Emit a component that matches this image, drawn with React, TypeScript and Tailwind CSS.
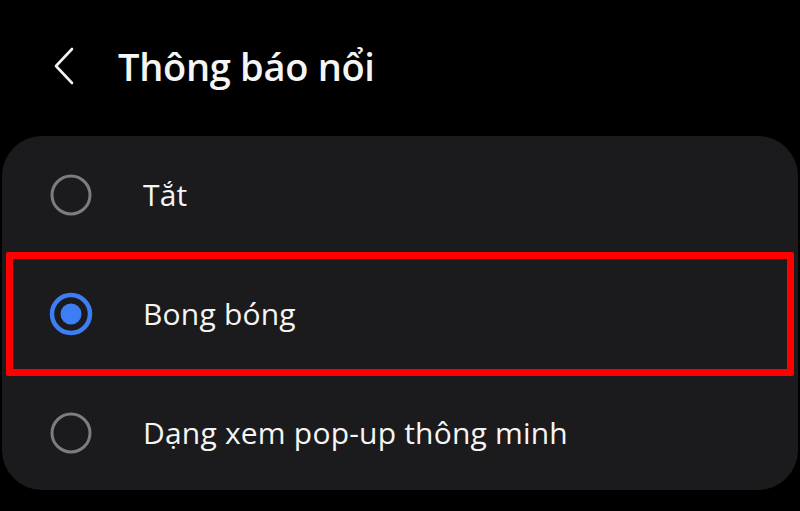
const OPTIONS = [
  { label: "Tắt", selected: false },
  { label: "Bong bóng", selected: true },
  { label: "Dạng xem pop-up thông minh", selected: false },
];

function Radio({ selected }: { selected: boolean }) {
  return (
    <svg width="46" height="46" viewBox="0 0 46 46" className="shrink-0">
      {selected ? (
        <>
          <circle cx="23" cy="23" r="19" fill="none" stroke="#3d7ef5" strokeWidth="4.5" />
          <circle cx="23" cy="23" r="10.5" fill="#3d7ef5" />
        </>
      ) : (
        <circle cx="23" cy="23" r="19" fill="none" stroke="#7d7d7f" strokeWidth="3" />
      )}
    </svg>
  );
}

export default function App() {
  return (
    <div
      className="w-[800px] h-[511px] bg-black overflow-hidden text-[#f5f5f5]"
      style={{ fontFamily: "'Open Sans', Roboto, sans-serif" }}
    >
      {/* Header */}
      <div className="flex items-center h-[136px] pl-[50px] pb-[4px]">
        <svg width="30" height="40" viewBox="0 0 30 40" className="shrink-0">
          <path d="M22 3 L6 20 L22 37" fill="none" stroke="#f2f2f2" strokeWidth="2.6" strokeLinecap="round" strokeLinejoin="round" />
        </svg>
        <h1 className="ml-[38px] text-[38px] font-semibold tracking-[-0.3px]">Thông báo nổi</h1>
      </div>

      {/* Options card */}
      <div className="mx-[2px] w-[796px] h-[354px] rounded-[40px] bg-[#1b1b1d] flex flex-col pt-[2px]">
        {OPTIONS.map((opt) => (
          <div
            key={opt.label}
            className={
              opt.selected
                ? "flex items-center h-[127px] mx-[4px] border-[7px] border-[#ff0000] rounded-[2px] pl-[35px]"
                : "flex items-center h-[118px] pl-[46px]"
            }
          >
            <Radio selected={opt.selected} />
            <span className="ml-[49px] text-[30px] leading-none tracking-[0.2px]">{opt.label}</span>
          </div>
        ))}
      </div>
    </div>
  );
}
